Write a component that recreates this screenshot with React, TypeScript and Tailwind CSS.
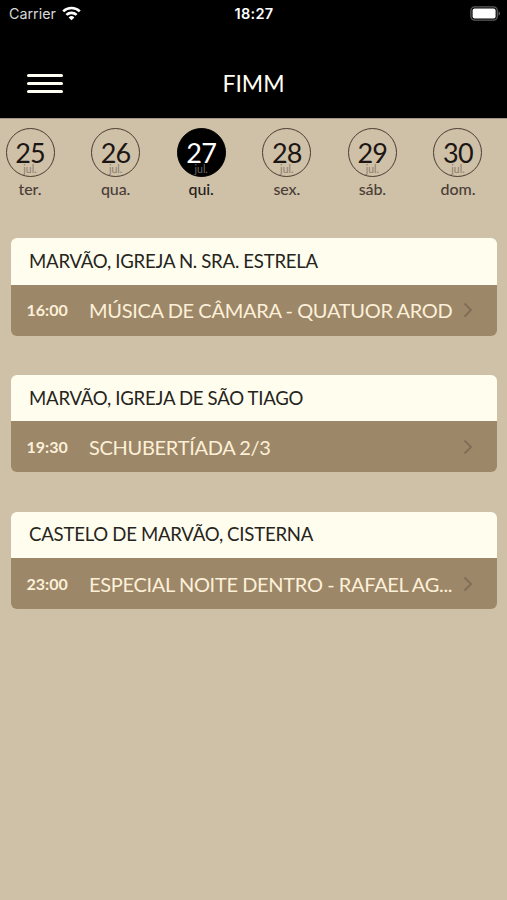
type Day = { num: string; label: string };

type Venue = { name: string; time: string; title: string };

const DAYS: Day[] = [
  { num: "25", label: "ter." },
  { num: "26", label: "qua." },
  { num: "27", label: "qui." },
  { num: "28", label: "sex." },
  { num: "29", label: "sáb." },
  { num: "30", label: "dom." },
];

const VENUES: Venue[] = [
  { name: "MARVÃO, IGREJA N. SRA. ESTRELA", time: "16:00", title: "MÚSICA DE CÂMARA - QUATUOR AROD" },
  { name: "MARVÃO, IGREJA DE SÃO TIAGO", time: "19:30", title: "SCHUBERTÍADA 2/3" },
  { name: "CASTELO DE MARVÃO, CISTERNA", time: "23:00", title: "ESPECIAL NOITE DENTRO - RAFAEL AG..." },
];

function StatusBar() {
  return (
    <div className="grid h-[27px] grid-cols-3 items-center pl-[9px] pr-[6px] font-['Inter',sans-serif] text-white">
      <div className="flex items-center gap-[6px]">
        <span className="text-[14.3px] text-[#d8d8d8]">Carrier</span>
        <svg width="19" height="15" viewBox="0 0 19 15" fill="none" stroke="white" strokeWidth="2.6">
          <path d="M1.2 5.4a12 12 0 0 1 16.6 0" />
          <path d="M4.4 8.9a7.4 7.4 0 0 1 10.2 0" />
          <path d="M9.5 14.2 6.6 11.4a4.2 4.2 0 0 1 5.8 0z" fill="white" stroke="none" />
        </svg>
      </div>
      <span className="pr-[2px] text-center text-[14.5px] font-semibold tracking-[0.3px]">18:27</span>
      <svg className="justify-self-end" width="31" height="15" viewBox="0 0 31 15">
        <rect x="0.9" y="0.9" width="26.4" height="13.2" rx="3.8" fill="none" stroke="#5e5e5e" strokeWidth="1.3" />
        <rect x="2.6" y="2.5" width="23" height="10" rx="2" fill="white" />
        <path d="M28.6 5.2a2.6 2.6 0 0 1 0 4.6z" fill="#6a6a6a" />
      </svg>
    </div>
  );
}

function DayButton({ day, active }: { day: Day; active: boolean }) {
  return (
    <button className="flex w-[50px] flex-col items-center">
      <span
        className={
          active
            ? "flex size-[49px] flex-col items-center rounded-full border-[1.5px] border-black bg-black pt-[12px] text-white"
            : "flex size-[49px] flex-col items-center rounded-full border-[1.5px] border-[#4a3c31] pt-[12px] text-[#1c1614]"
        }
      >
        <span className="text-[27px] leading-[24px] tracking-[-0.8px]">{day.num}</span>
        <span className={active ? "-mt-[1px] text-[10.5px] leading-[10px] text-[#6f6a66]" : "-mt-[1px] text-[10.5px] leading-[10px] text-[#8b7d6d]"}>
          jul.
        </span>
      </span>
      <span className={active ? "mt-[2.5px] text-[16px] leading-5 font-medium tracking-[-0.1px] text-[#241c18]" : "mt-[2.5px] text-[16px] leading-5 font-medium tracking-[-0.1px] text-[#4a3e36]"}>
        {day.label}
      </span>
    </button>
  );
}

function VenueCard({ venue }: { venue: Venue }) {
  return (
    <section className="overflow-hidden rounded-[6px]">
      <h2 className="flex h-[46.5px] items-center bg-[#fffeee] pl-[18.5px] pt-px text-[18.6px] tracking-[-0.23px] text-[#262420] [word-spacing:-0.3px]">
        {venue.name}
      </h2>
      <div className="flex h-[51px] items-center bg-[#9c8769] pl-4 pr-[23px] text-[#fdf0d8]">
        <span className="w-[62.5px] shrink-0 text-[16px] font-bold">{venue.time}</span>
        <span className="flex-1 text-[20px] tracking-[-0.3px] whitespace-nowrap [word-spacing:-0.3px]">{venue.title}</span>
        <svg className="shrink-0" width="12" height="18" viewBox="0 0 12 18" fill="none" stroke="#7f6d56" strokeWidth="1.8">
          <path d="M2.5 2.5 9 9l-6.5 6.5" />
        </svg>
      </div>
    </section>
  );
}

export default function App() {
  return (
    <main className="h-[900px] w-[507px] overflow-hidden bg-[#cfc0a8] font-['Lato',sans-serif]">
      <header className="h-[118px] bg-black">
        <StatusBar />
        <div className="grid h-[91px] grid-cols-3 items-center pt-[21px]">
          <button className="ml-[27px] flex w-9 flex-col gap-[5px]" aria-label="Menu">
            <span className="h-[3px] w-full rounded-full bg-[#fffff4]" />
            <span className="h-[3px] w-full rounded-full bg-[#fffff4]" />
            <span className="h-[3px] w-full rounded-full bg-[#fffff4]" />
          </button>
          <h1 className="text-center text-[23px] text-[#fffff4]">FIMM</h1>
        </div>
      </header>
      <nav className="flex justify-between border-t border-[#a5948a] pl-[5px] pr-6 pt-[8.5px]">
        {DAYS.map((day) => (
          <DayButton key={day.num} day={day} active={day.num === "27"} />
        ))}
      </nav>
      <div className="mt-[39px] flex flex-col gap-[39.3px] px-[10.5px]">
        {VENUES.map((venue) => (
          <VenueCard key={venue.name} venue={venue} />
        ))}
      </div>
    </main>
  );
}
